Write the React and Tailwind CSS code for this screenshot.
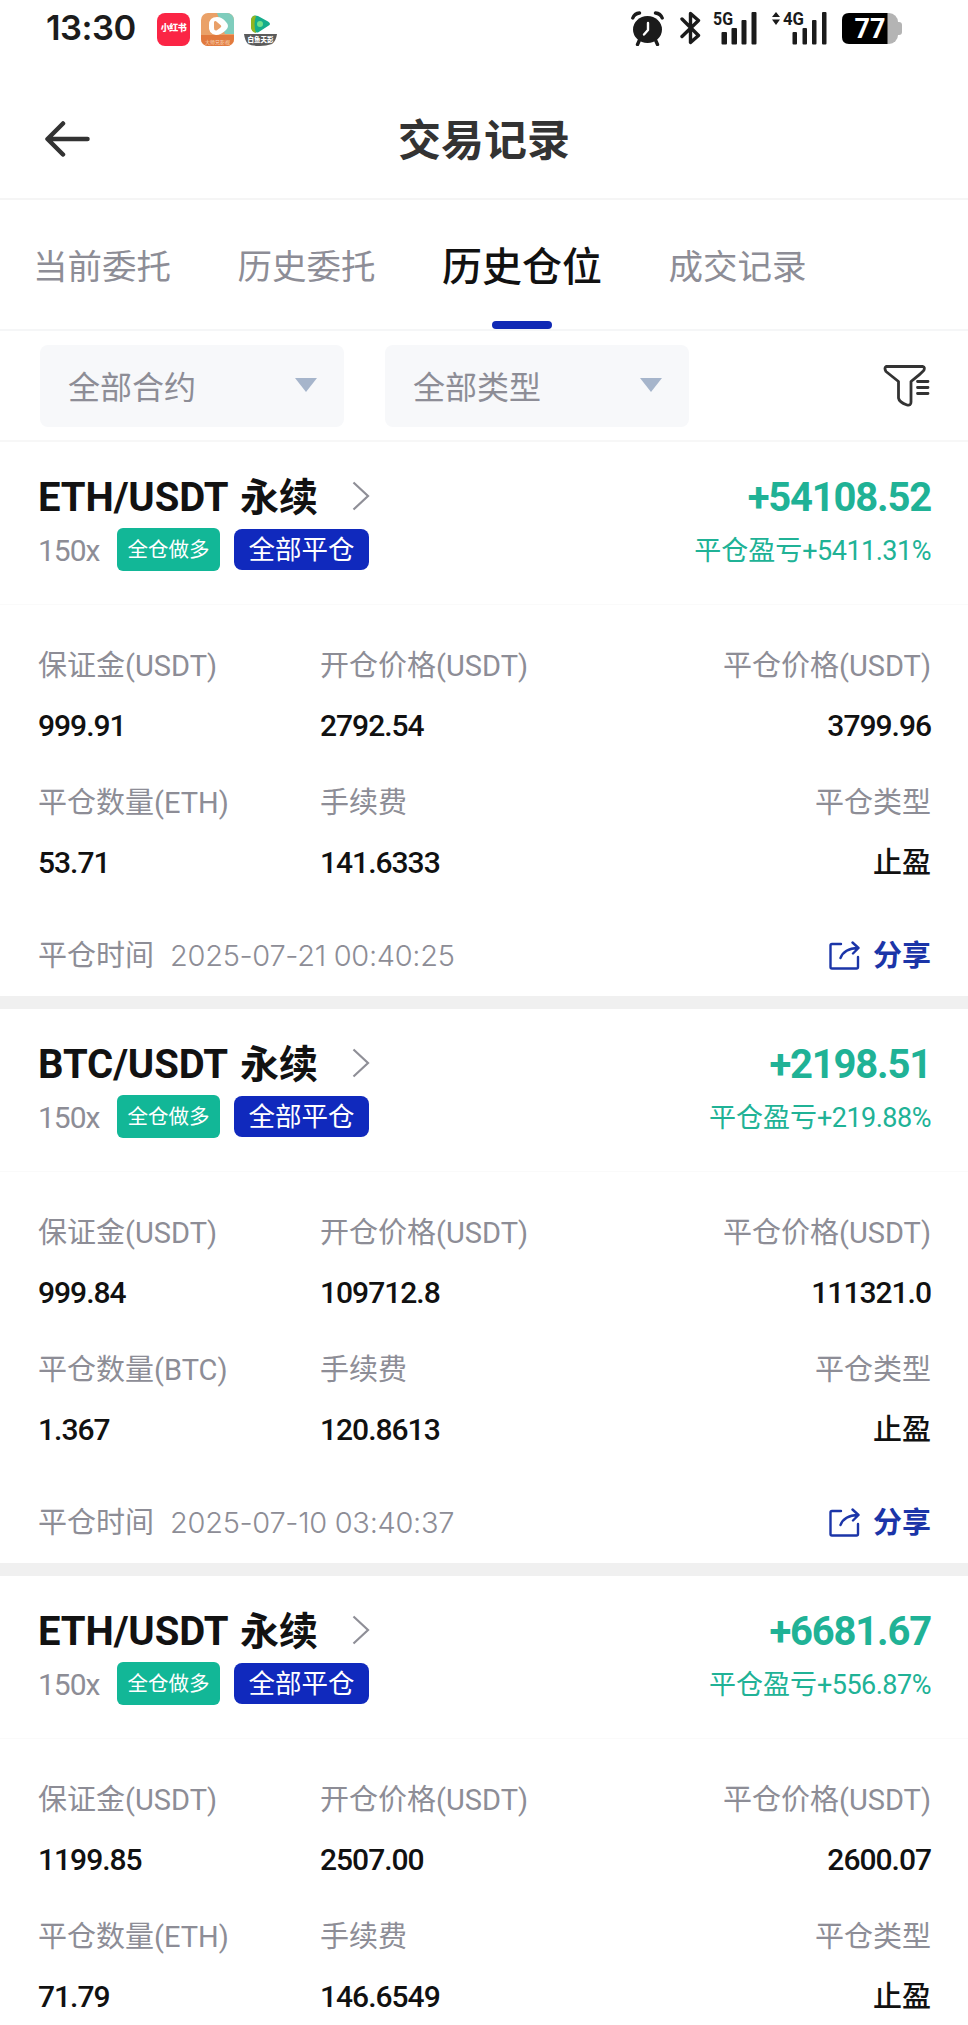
import { useState } from 'react'

const tabs = ['当前委托', '历史委托', '历史仓位', '成交记录']

const positions = [
  {
    coin: 'ETH', pnl: '+54108.52', rate: '+5411.31%', margin: '999.91', open: '2792.54', close: '3799.96',
    amount: '53.71', fee: '141.6333', time: '2025-07-21 00:40:25'
  },
  {
    coin: 'BTC', pnl: '+2198.51', rate: '+219.88%', margin: '999.84', open: '109712.8', close: '111321.0',
    amount: '1.367', fee: '120.8613', time: '2025-07-10 03:40:37'
  },
  {
    coin: 'ETH', pnl: '+6681.67', rate: '+556.87%', margin: '1199.85', open: '2507.00', close: '2600.07',
    amount: '71.79', fee: '146.6549'
  },
]

const labelClass = "h-10 leading-[42px] text-[29px] text-[#8d8d96] whitespace-nowrap"
const valueClass = "h-10 leading-10 mt-[21px] text-[30px] font-medium tracking-[-1px] text-[#111] whitespace-nowrap"

function StatusBar() {
  return (
    <div className="h-14 shrink-0 flex items-center pl-[46px] pr-[66px]">
      <span className="w-[111px] font-['Inter'] text-[34.500px] leading-[34px] font-semibold tracking-[-0.5px] text-[#1c1c1c]">13:30</span>
      <div className="w-[33px] h-[33px] mt-[2px] rounded-lg bg-[#fb2545] flex items-center justify-center text-white text-[9px] font-black tracking-[-0.5px] whitespace-nowrap">小红书</div>
      <svg className="ml-[11px] mt-[2px]" width="33" height="33" viewBox="0 0 33 33">
        <defs>
          <clipPath id="app"><rect width="33" height="33" rx="7" /></clipPath>
        </defs>
        <g clipPath="url(#app)">
          <rect width="33" height="33" fill="#eaa168" />
          <path d="M16 0H33V21H24Z" fill="#7fcdbd" />
          <path d="M0 22H33V33H0Z" fill="#e27a3e" />
        </g>
        <path d="M8 12Q8 4 16 4Q21 4 25 9Q29 13 25 17Q20 22 15 22Q7 21 8 12Z" fill="#fff" />
        <path d="M13 9Q14 7 16 9L20 12.5Q21 13.500 19 15L15.500 17.500Q13 18 13 15Z" fill="#e9a069" />
        <text x="16.500" y="30.500" textAnchor="middle" fontSize="5" fill="#f8d9bf">大师兄影视</text>
      </svg>
      <svg className="ml-[10px] mt-[2px]" width="33" height="33" viewBox="0 0 33 33">
        <path d="M7 7Q8 1 14 3L24 8.500Q28 11 24 13L14 19.500Q8 20 7 14Z" fill="#15ad8b" />
        <path d="M7 7Q8 2 12 3Q9 11 12 20Q7 19 7 14Z" fill="#93b51f" />
        <circle cx="16" cy="11" r="3" fill="#6fe08a" />
        <path d="M0 21H33Q32 28 28 31Q22 33 16 33Q8 33 4 31Q1 28 0 21Z" fill="#5b5b5b" />
        <text x="16.500" y="29" textAnchor="middle" fontSize="6.500" fontWeight="900" fill="#fff">白鱼天影</text>
      </svg>

      <div className="ml-auto flex items-center text-[#1b1b1b]">
        <svg width="33" height="35" viewBox="0 0 33 35" fill="currentColor">
          <ellipse cx="16.500" cy="18.500" rx="14.500" ry="13.500" />
          <path d="M1.800 7Q3.500 2.500 8.500 2M31.200 7Q29.500 2.500 24.500 2" fill="none" stroke="currentColor" strokeWidth="3.400" strokeLinecap="round" />
          <path d="M8.500 29L6.500 33.500M24.500 29L26.500 33.500" stroke="currentColor" strokeWidth="3.400" strokeLinecap="round" />
          <path d="M17 12V19L13 23.500" fill="none" stroke="#fff" strokeWidth="2.400" strokeLinecap="round" strokeLinejoin="round" />
        </svg>
        <svg className="ml-4" width="21" height="34" viewBox="0 0 21 34" fill="none" stroke="currentColor" strokeWidth="3.400" strokeLinejoin="round" strokeLinecap="round">
          <path d="M2 8L18.500 24.500L10.500 31.500V2.500L18.500 9.500L2 25.500" />
        </svg>
        <svg className="ml-3 overflow-visible" width="44" height="34" viewBox="0 0 44 34" fill="currentColor">
          <text x="0" y="14" fontSize="18.500" fontWeight="700" textLength="20" lengthAdjust="spacingAndGlyphs">5G</text>
          <rect x="8.500" y="21" width="5.500" height="12.500" rx="1" />
          <rect x="18.500" y="17" width="5.500" height="16.500" rx="1" />
          <rect x="28.500" y="9" width="5" height="24.500" rx="1" />
          <rect x="38.500" y="1" width="5" height="32.500" rx="1" />
        </svg>
        <svg className="ml-[15px] overflow-visible" width="55" height="34" viewBox="0 0 55 34" fill="currentColor">
          <path d="M0 6L4 1L8 6ZM0 8.500L4 14L8 8.500Z" />
          <text x="11" y="14" fontSize="18.500" fontWeight="700" textLength="21" lengthAdjust="spacingAndGlyphs">4G</text>
          <rect x="20.500" y="21" width="4.500" height="12.500" rx="1" />
          <rect x="30.500" y="17" width="4.500" height="16.500" rx="1" />
          <rect x="40" y="9" width="4.500" height="24.500" rx="1" />
          <rect x="50" y="1" width="4.500" height="32.500" rx="1" />
        </svg>
        <svg className="ml-[15px]" width="60" height="31" viewBox="0 0 60 31">
          <rect width="56" height="31" rx="9" fill="#b4b4b4" />
          <rect x="53" y="9" width="7" height="13" rx="3" fill="#b4b4b4" />
          <path d="M7 0H45.500V31H7Q0 31 0 24V7Q0 0 7 0Z" fill="#000" />
          <text x="12.500" y="25" fontSize="27" fontWeight="700" fill="#fff" textLength="31" lengthAdjust="spacingAndGlyphs">77</text>
        </svg>
      </div>
    </div>
  )
}

function Dropdown({ text }) {
  return (
    <button className="w-[304px] h-[82px] rounded-lg bg-[#f7f8fa] flex items-center justify-between pl-7 pr-[27px] text-[32px] text-[#8d8d96]">
      <span className="pt-[3px]">{text}</span>
      <svg className="mb-[2px]" width="22" height="14" viewBox="0 0 22 14"><path d="M0 0H22L11 14Z" fill="#a6b5cb" /></svg>
    </button>
  )
}

function Field({ label, unit, value, right, cjk }) {
  return (
    <div className={right ? 'text-right' : ''}>
      <div className={labelClass}>
        {label}{unit && <span className="tracking-[0px]">({unit})</span>}
      </div>
      <div className={valueClass}>{cjk ? <span className="text-[29px] tracking-normal">{value}</span> : value}</div>
    </div>
  )
}

function PositionCard({ p }) {
  return (
    <div className="h-[567px] shrink-0 border-b-[13px] border-[#f0f0f0]">
      <div className="h-[163px] pt-[31px] pl-[38px] pr-[37px] border-b border-[#fafafa]">
        <div className="h-[50px] flex items-center justify-between">
          <div className="flex items-center text-[40px] leading-[50px] font-bold text-[#121212]">
            <span className="w-[202px] tracking-[-0.1px] whitespace-nowrap">{p.coin}/USDT</span>
            <span className="text-[39px]">永续</span>
            <svg className="ml-[34px] mb-1" width="18" height="30" viewBox="0 0 18 30" fill="none" stroke="#8f8f97" strokeWidth="2.200"><path d="M1.500 1.500L16 15L1.500 28.500" /></svg>
          </div>
          <span className="text-[40px] leading-[50px] font-bold tracking-[-1.200px] text-[#20b296]">{p.pnl}</span>
        </div>
        <div className="h-11 mt-1 flex items-center">
          <span className="w-[79px] pt-[3px] text-[30px] leading-10 tracking-[-1px] text-[#8d8d96]">150x</span>
          <span className="w-[103px] h-[43px] pt-[2px] rounded-md bg-[#12b797] text-white text-[20.500px] flex items-center justify-center">全仓做多</span>
          <span className="ml-[14px] w-[135px] h-[41px] pt-[2px] rounded-lg bg-[#1029bd] text-white text-[26.500px] flex items-center justify-center">全部平仓</span>
          <span className="ml-auto pt-[3px] text-[27px] leading-10 text-[#20b296]">平仓盈亏<span className="tracking-[-0.500px]">{p.rate}</span></span>
        </div>
      </div>
      <div className="pt-10 pl-[38px] pr-[37px]">
        <div className="grid grid-cols-[282px_1fr_1fr] gap-y-9">
          <Field label="保证金" unit="USDT" value={p.margin} />
          <Field label="开仓价格" unit="USDT" value={p.open} />
          <Field label="平仓价格" unit="USDT" value={p.close} right />
          <Field label="平仓数量" unit={p.coin} value={p.amount} />
          <Field label="手续费" value={p.fee} />
          <Field label="平仓类型" value="止盈" right cjk />
        </div>
        {p.time && (
          <div className="mt-[54px] h-10 flex items-center text-[29px] text-[#8d8d96]">
            <span>平仓时间</span>
            <span className="ml-4 mb-[2px] font-['Inter'] font-light tracking-[-0.300px]">{p.time}</span>
            <button className="ml-auto flex items-center font-bold text-[#1b35a8]">
              <svg className="mr-[13px] mb-[4px]" width="31" height="29" viewBox="0 0 31 29" fill="none" stroke="currentColor" strokeWidth="2.400" strokeLinecap="round" strokeLinejoin="round">
                <path d="M12 3H3Q1.500 3 1.500 4.500V26Q1.500 27.500 3 27.500H27.500Q29 27.500 29 26V16" />
                <path d="M11.500 17Q15 7.500 29 7M23.500 1.500L29.500 7L24 12.500" />
              </svg>
              分享
            </button>
          </div>
        )}
      </div>
    </div>
  )
}

export default function App() {
  const [active, setActive] = useState(2)

  return (
    <div className="w-[968px] h-[2025px] overflow-hidden bg-white flex flex-col font-['Roboto','Noto_Sans_CJK_SC',sans-serif]">
      <StatusBar />

      <div className="h-36 shrink-0 border-b-2 border-[#f5f5f5] grid grid-cols-[1fr_auto_1fr] items-center px-[45px] pt-[24px]">
        <svg width="46" height="36" viewBox="0 0 46 36" fill="none" stroke="#333" strokeWidth="4.500" strokeLinecap="round" strokeLinejoin="round"><path d="M18 2.500L2.500 18L18 33.500M3 18H42.500" /></svg>
        <h1 className="pt-[3px] text-[43px] leading-[50px] font-bold text-[#333]">交易记录</h1>
      </div>

      <div className="h-[131px] shrink-0 border-b-2 border-[#f5f6f7] flex items-center pl-[33px] gap-[66.500px]">
        {tabs.map((t, i) => (
          <button
            key={t}
            onClick={() => setActive(i)}
            className={i === active
              ? 'relative h-full pt-[6px] text-[40px] font-medium text-[#111] whitespace-nowrap'
              : 'h-full pt-[7px] text-[34.500px] text-[#8d8d96] whitespace-nowrap'}
          >
            {t}
            {i === active && <span className="absolute bottom-0 left-1/2 -translate-x-1/2 w-[60px] h-2 rounded-full bg-[#1029b5]" />}
          </button>
        ))}
      </div>

      <div className="h-[111px] shrink-0 border-b-2 border-[#f7f7f7] flex items-start pt-[14px] pl-10 pr-[38px]">
        <Dropdown text="全部合约" />
        <div className="w-[41px]" />
        <Dropdown text="全部类型" />
        <svg className="ml-auto mt-5" width="47" height="42" viewBox="0 0 47 42" fill="none" stroke="#333" strokeWidth="2.800" strokeLinejoin="round" strokeLinecap="round">
          <path d="M3 1.500H40Q42 2 41 5Q40.500 6.500 28 16.500V37Q28 41 24 40Q16 37 15.500 33V16.500L3 6.500Q1 3 3 1.500Z" />
          <path d="M34.500 16.500H45M34.500 22.500H45M34.500 28.500H45" />
        </svg>
      </div>

      {positions.map((p, i) => <PositionCard key={i} p={p} />)}
    </div>
  )
}
